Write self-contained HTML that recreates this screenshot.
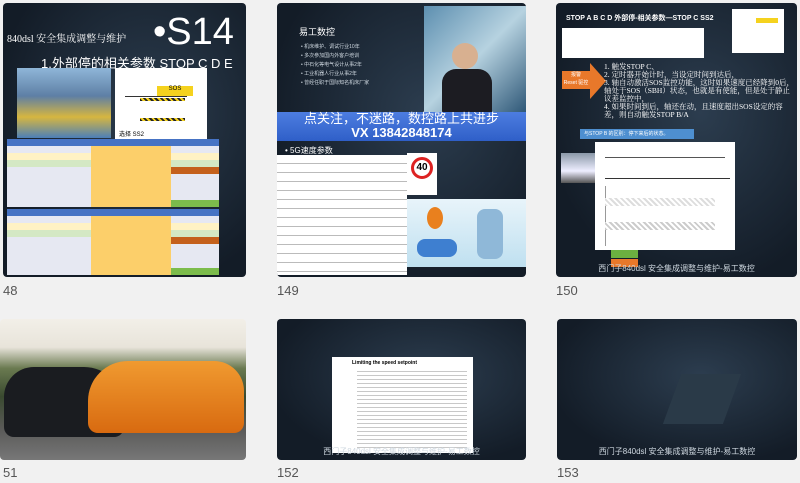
<!DOCTYPE html>
<html><head><meta charset="utf-8"><style>
*{margin:0;padding:0;box-sizing:border-box}
body{width:800px;height:483px;background:#f1f1f1;position:relative;overflow:hidden;font-family:"Liberation Sans","Noto Sans CJK SC",sans-serif}
.t{position:absolute;border-radius:4px;overflow:hidden;background:radial-gradient(ellipse at 60% 40%,#2c3d4f,#131c27 75%)}
.a{position:absolute}
.lbl{position:absolute;font-size:13px;color:#555}
.w{background:#fff}
.row{position:absolute;height:7px;left:0;right:0}
.foot{position:absolute;bottom:3px;left:0;right:0;text-align:center;color:#cfd8e0;font-size:8px}
</style></head><body>

<!-- column 1 row 1 -->
<div class="t" style="left:3px;top:3px;width:243px;height:274px">
 <div class="a" style="left:4px;top:27px;color:#fff;font-size:10px;font-family:'Liberation Serif','Noto Serif CJK SC',serif">840dsl 安全集成调整与维护</div>
 <div class="a" style="left:150px;top:8px;color:#fff;font-size:38px">•S14</div>
 <div class="a" style="left:38px;top:50px;color:#fff;font-size:13px">1.外部停的相关参数 STOP C D E</div>
 <div class="a" style="left:14px;top:65px;width:94px;height:70px;background:linear-gradient(#8fb6d8,#5e7fa5 40%,#d6b640 70%,#4c7fb8)"></div>
 <div class="a w" style="left:112px;top:65px;width:92px;height:72px">
  <div class="a" style="left:42px;top:18px;width:36px;height:10px;background:#f5d21e;font-size:6px;text-align:center">SOS</div>
  <div class="a" style="left:10px;top:28px;width:62px;height:1px;background:#333"></div>
  <div class="a" style="left:25px;top:30px;width:45px;height:3px;background:repeating-linear-gradient(45deg,#222 0 2px,#f5d21e 2px 4px)"></div>
  <div class="a" style="left:25px;top:50px;width:45px;height:3px;background:repeating-linear-gradient(45deg,#222 0 2px,#f5d21e 2px 4px)"></div>
  <div class="a" style="left:4px;top:61px;font-size:6px">选择 SS2</div>
 </div>
 <div class="a" style="left:4px;top:136px;width:212px;height:68px;background:#e6e8f2">
  <div class="row" style="top:0;background:#4673c4"></div>
  <div class="row" style="top:14px;background:#fff2c4"></div>
  <div class="row" style="top:21px;background:#d4e8c4"></div>
  <div class="a" style="left:84px;top:7px;width:80px;height:61px;background:#fccf6a"></div>
  <div class="a" style="left:164px;top:28px;width:48px;height:7px;background:#c4601c"></div>
  <div class="a" style="left:164px;top:61px;width:48px;height:7px;background:#7cbc4c"></div>
 </div>
 <div class="a" style="left:4px;top:206px;width:212px;height:66px;background:#e6e8f2">
  <div class="row" style="top:0;background:#4673c4"></div>
  <div class="row" style="top:14px;background:#fff2c4"></div>
  <div class="row" style="top:21px;background:#d4e8c4"></div>
  <div class="a" style="left:84px;top:7px;width:80px;height:59px;background:#fccf6a"></div>
  <div class="a" style="left:164px;top:28px;width:48px;height:7px;background:#c4601c"></div>
  <div class="a" style="left:164px;top:59px;width:48px;height:7px;background:#7cbc4c"></div>
 </div>
</div>
<div class="lbl" style="left:3px;top:283px">48</div>

<!-- column 2 row 1 -->
<div class="t" style="left:277px;top:3px;width:249px;height:274px">
 <div class="a" style="left:22px;top:22px;color:#fff;font-size:9px">易工数控</div>
 <div class="a" style="left:24px;top:40px;color:#cfd8e0;font-size:5px;line-height:9px">• 机床维护、调试行业10年<br>• 多次参加国内外客户培训<br>• 中石化等电气设计从事2年<br>• 工业机器人行业从事2年<br>• 曾经任职于国际知名机床厂家</div>
 <div class="a" style="left:147px;top:3px;width:102px;height:106px;background:linear-gradient(135deg,#5d8fb0,#b6d2e0 50%,#2f5878)"></div>
 <div class="a" style="left:175px;top:40px;width:26px;height:26px;border-radius:50%;background:#d8b090"></div>
 <div class="a" style="left:165px;top:66px;width:50px;height:43px;border-radius:14px 14px 0 0;background:#1c1c22"></div>
 <div class="a" style="left:0;top:109px;width:249px;height:29px;background:linear-gradient(#4d7de0,#2f5fc8);color:#fff;text-align:center;font-size:13px;line-height:14px">点关注，不迷路，数控路上共进步<br><b>VX 13842848174</b></div>
 <div class="a" style="left:8px;top:142px;color:#fff;font-size:8px">• 5G速度参数</div>
 <div class="a w" style="left:0;top:152px;width:130px;height:120px;background:repeating-linear-gradient(#fff 0 8px,#bbb 8px 9px)"></div>
 <div class="a w" style="left:130px;top:150px;width:30px;height:42px;text-align:center">
  <div style="margin:4px auto 0;width:22px;height:22px;border:3px solid #d22;border-radius:50%;font-size:10px;font-weight:bold;line-height:16px">40</div></div>
 <div class="a" style="left:130px;top:196px;width:119px;height:68px;background:linear-gradient(#e8f4fa,#bfe0f0)">
  <div class="a" style="left:10px;top:40px;width:40px;height:18px;background:#3e7fd0;border-radius:8px"></div>
  <div class="a" style="left:20px;top:8px;width:16px;height:22px;background:#e9801e;border-radius:50%"></div>
  <div class="a" style="left:70px;top:10px;width:26px;height:50px;background:#8fb8d8;border-radius:8px"></div>
 </div>
</div>
<div class="lbl" style="left:277px;top:283px">149</div>

<!-- column 3 row 1 -->
<div class="t" style="left:556px;top:3px;width:241px;height:274px">
 <div class="a" style="left:10px;top:10px;color:#fff;font-size:7px;font-weight:bold">STOP A B C D 外部停-相关参数—STOP C SS2</div>
 <div class="a w" style="left:6px;top:25px;width:142px;height:30px"></div>
 <div class="a w" style="left:176px;top:6px;width:52px;height:44px">
  <div class="a" style="left:24px;top:9px;width:22px;height:5px;background:#f5d21e"></div></div>
 <div class="a" style="left:6px;top:60px;width:0;height:0;border-top:24px solid transparent;border-bottom:24px solid transparent;border-left:18px solid transparent"></div>
 <div class="a" style="left:6px;top:68px;width:28px;height:18px;background:#e8782a;color:#fff;font-size:5px;text-align:center;line-height:8px">报警<br>Reset 驱控</div>
 <div class="a" style="left:34px;top:60px;width:0;height:0;border-top:18px solid transparent;border-bottom:18px solid transparent;border-left:16px solid #e8782a"></div>
 <div class="a" style="left:48px;top:60px;width:190px;color:#fff;font-size:7.5px;line-height:8px;font-family:'Liberation Serif','Noto Serif CJK SC',serif">1. 触发STOP C、<br>2. 定时器开始计时，当设定时间到达后，<br>3. 轴自动激活SOS监控功能，这时如果速度已经降到0后，轴处于SOS（SBH）状态，也就是有使能，但是处于静止议差监控中，<br>4. 如果时间到后，轴还在动，且速度超出SOS设定的容差，则自动触发STOP B/A</div>
 <div class="a" style="left:24px;top:126px;width:114px;height:10px;background:#4e8fd0;color:#fff;font-size:5px;line-height:10px;padding-left:4px">与STOP B 的区别：停下来后的状态。</div>
 <div class="a" style="left:5px;top:150px;width:40px;height:30px;background:linear-gradient(#8a98a8,#eef 60%,#555)"></div>
 <div class="a w" style="left:39px;top:139px;width:140px;height:108px">
  <div class="a" style="left:10px;top:15px;width:120px;height:1px;background:#555"></div>
  <div class="a" style="left:10px;top:36px;width:125px;height:1px;background:#333"></div>
  <div class="a" style="left:10px;top:44px;width:1px;height:60px;background:#999"></div>
  <div class="a" style="left:10px;top:56px;width:110px;height:8px;background:repeating-linear-gradient(45deg,#ddd 0 2px,#fff 2px 4px)"></div>
  <div class="a" style="left:10px;top:80px;width:110px;height:8px;background:repeating-linear-gradient(45deg,#ccc 0 2px,#fff 2px 4px)"></div>
 </div>
 <div class="a" style="left:55px;top:247px;width:27px;height:8px;background:#6cb040"></div>
 <div class="a" style="left:55px;top:256px;width:27px;height:8px;background:#e8782a"></div>
 <div class="foot">西门子840dsl 安全集成调整与维护-易工数控</div>
</div>
<div class="lbl" style="left:556px;top:283px">150</div>

<!-- row 2 -->
<div class="t" style="left:0;top:319px;width:246px;height:141px;background:linear-gradient(#f2efe8 0,#e8e4da 20%,#6a7a50 35%,#3a4a30 55%,#5a5a58 78%,#777 100%)">
 <div class="a" style="left:4px;top:48px;width:120px;height:70px;border-radius:30px 40px 10px 10px;background:#1a1c20"></div>
 <div class="a" style="left:88px;top:42px;width:156px;height:72px;border-radius:40px 30px 10px 10px;background:linear-gradient(#f09a30,#d86a10)"></div>
</div>
<div class="lbl" style="left:3px;top:465px">51</div>

<div class="t" style="left:277px;top:319px;width:249px;height:141px">
 <div class="a w" style="left:55px;top:38px;width:141px;height:96px">
  <div class="a" style="left:20px;top:3px;font-size:5px;font-weight:bold">Limiting the speed setpoint</div>
  <div class="a" style="left:25px;top:12px;width:110px;height:80px;background:repeating-linear-gradient(#fff 0 2px,#c8c8c8 2px 3px,#fff 3px 4px)"></div>
 </div>
 <div class="foot">西门子840dsl 安全集成调整与维护-易工数控</div>
</div>
<div class="lbl" style="left:277px;top:465px">152</div>

<div class="t" style="left:557px;top:319px;width:240px;height:141px">
 <div class="a" style="left:115px;top:55px;width:60px;height:50px;background:#2a3a48;transform:skewX(-20deg)"></div>
 <div class="foot">西门子840dsl 安全集成调整与维护-易工数控</div>
</div>
<div class="lbl" style="left:557px;top:465px">153</div>
</body></html>
